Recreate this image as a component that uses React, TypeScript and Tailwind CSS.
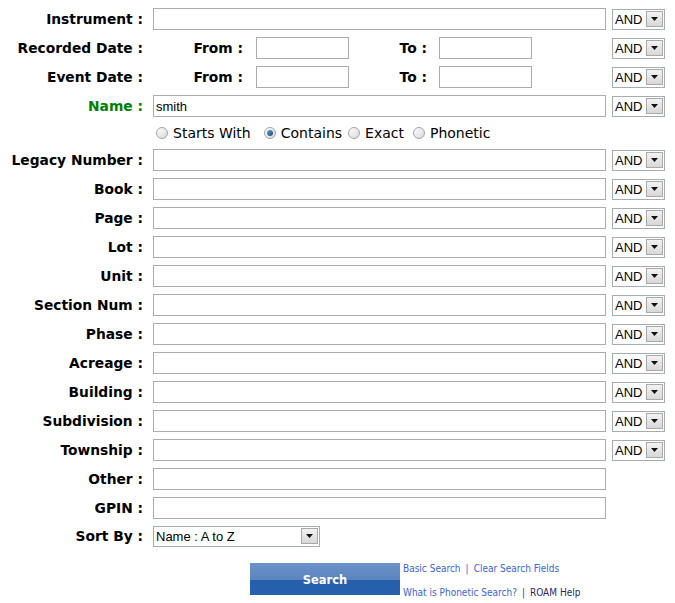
import React from "react";

const LBL = "text-right font-bold text-[13.8px] leading-none pt-[2px] [font-family:'DejaVu_Sans',Verdana,sans-serif]";
const ARIAL = "[font-family:'Liberation_Sans',Arial,sans-serif]";

function FakeSelect({ value, w }: { value: string; w: string }) {
  return (
    <div className={`flex items-center h-[21px] border border-[#a5acb2] bg-white ${w}`}>
      <span className={`flex-1 pl-[2px] pt-[1px] text-[13px] leading-none text-black ${ARIAL}`}>{value}</span>
      <span className="w-[17px] h-[16px] mr-[1px] border border-[#a9a9a9] bg-gradient-to-b from-[#f2f2f2] to-[#d8d8d8] flex items-center justify-center">
        <svg width="7" height="4" viewBox="0 0 7 4">
          <path d="M0 0h7L3.5 4z" fill="#111" />
        </svg>
      </span>
    </div>
  );
}

function TextBox({ w, value }: { w: string; value?: string }) {
  return (
    <div className={`h-[22px] border border-[#ababab] bg-white flex items-center pl-[2px] pt-[1px] ${w}`}>
      <span className={`text-[13px] leading-none text-black ${ARIAL}`}>{value}</span>
    </div>
  );
}

function Row({
  label,
  children,
  and = true,
  green = false,
  h = "h-[29px]",
}: {
  label: string;
  children: React.ReactNode;
  and?: boolean;
  green?: boolean;
  h?: string;
}) {
  return (
    <div className={`flex items-center ${h}`}>
      <div className={`w-[143px] ${LBL} ${green ? "text-[#008000]" : "text-black"}`}>{label}</div>
      <div className="ml-[10px] w-[453px] flex items-center">{children}</div>
      {and && (
        <div className="ml-[6px] mt-[1px]">
          <FakeSelect value="AND" w="w-[53px]" />
        </div>
      )}
    </div>
  );
}

function Radio({ checked }: { checked?: boolean }) {
  return (
    <span className="w-[12px] h-[12px] rounded-full border border-[#a3a3a3] bg-gradient-to-br from-[#fdfdfd] to-[#d9d9d9] flex items-center justify-center">
      {checked && <span className="w-[6px] h-[6px] rounded-full bg-gradient-to-br from-[#5fa7d6] to-[#1a4a72]" />}
    </span>
  );
}

function DateRow({ label }: { label: string }) {
  return (
    <Row label={label}>
      <span className={`w-[90px] ${LBL} text-black`}>From :</span>
      <div className="ml-[13px]">
        <TextBox w="w-[93px]" />
      </div>
      <span className={`w-[78px] ${LBL} text-black`}>To :</span>
      <div className="ml-[12px]">
        <TextBox w="w-[93px]" />
      </div>
    </Row>
  );
}

export default function App() {
  const plain = [
    "Legacy Number :",
    "Book :",
    "Page :",
    "Lot :",
    "Unit :",
    "Section Num :",
    "Phase :",
    "Acreage :",
    "Building :",
    "Subdivision :",
    "Township :",
  ];
  const radioText = "text-[14px] leading-none pt-[1px] text-black [font-family:'DejaVu_Sans',Tahoma,sans-serif]";
  return (
    <div className="w-[675px] h-[603px] bg-white pt-[4px]">
      <Row label="Instrument :">
        <TextBox w="w-[453px]" />
      </Row>
      <DateRow label="Recorded Date :" />
      <DateRow label="Event Date :" />
      <Row label="Name :" green>
        <TextBox w="w-[453px]" value="smith" />
      </Row>
      <div className="flex items-center h-[25px] pl-[156px]">
        <label className="flex items-center gap-[5px]">
          <Radio />
          <span className={radioText}>Starts With</span>
        </label>
        <label className="flex items-center gap-[5px] ml-[13px]">
          <Radio checked />
          <span className={radioText}>Contains</span>
        </label>
        <label className="flex items-center gap-[5px] ml-[6px]">
          <Radio />
          <span className={radioText}>Exact</span>
        </label>
        <label className="flex items-center gap-[5px] ml-[9px]">
          <Radio />
          <span className={radioText}>Phonetic</span>
        </label>
      </div>
      {plain.map((l) => (
        <Row key={l} label={l}>
          <TextBox w="w-[453px]" />
        </Row>
      ))}
      <Row label="Other :" and={false}>
        <TextBox w="w-[453px]" />
      </Row>
      <Row label="GPIN :" and={false}>
        <TextBox w="w-[453px]" />
      </Row>
      <Row label="Sort By :" and={false} h="h-[28px]">
        <FakeSelect value="Name : A to Z" w="w-[167px]" />
      </Row>
      <div className="flex mt-[13px] ml-[250px]">
        <button className="w-[150px] h-[32px] flex flex-col relative">
          <span className="h-[17px] w-full bg-gradient-to-b from-[#6b92c8] to-[#5b84bf]" />
          <span className="h-[15px] w-full bg-[#2660ac]" />
          <span className="absolute inset-0 flex items-center justify-center pt-[4px] text-white font-bold text-[11.5px] [font-family:'DejaVu_Sans',Tahoma,sans-serif]">
            Search
          </span>
        </button>
        <div className="ml-[3px] flex flex-col justify-between h-[34px] mt-[1px] text-[10px] leading-none [font-family:'DejaVu_Sans_Condensed','Liberation_Sans',Tahoma,sans-serif]">
          <div className="text-[#3b64d0]">
            <span>Basic Search</span>
            <span className="mx-[5px]">|</span>
            <span>Clear Search Fields</span>
          </div>
          <div className="text-[#3b64d0]">
            <span>What is Phonetic Search?</span>
            <span className="mx-[5px] text-[#333366]">|</span>
            <span className="text-[#2b1f66]">ROAM Help</span>
          </div>
        </div>
      </div>
    </div>
  );
}
